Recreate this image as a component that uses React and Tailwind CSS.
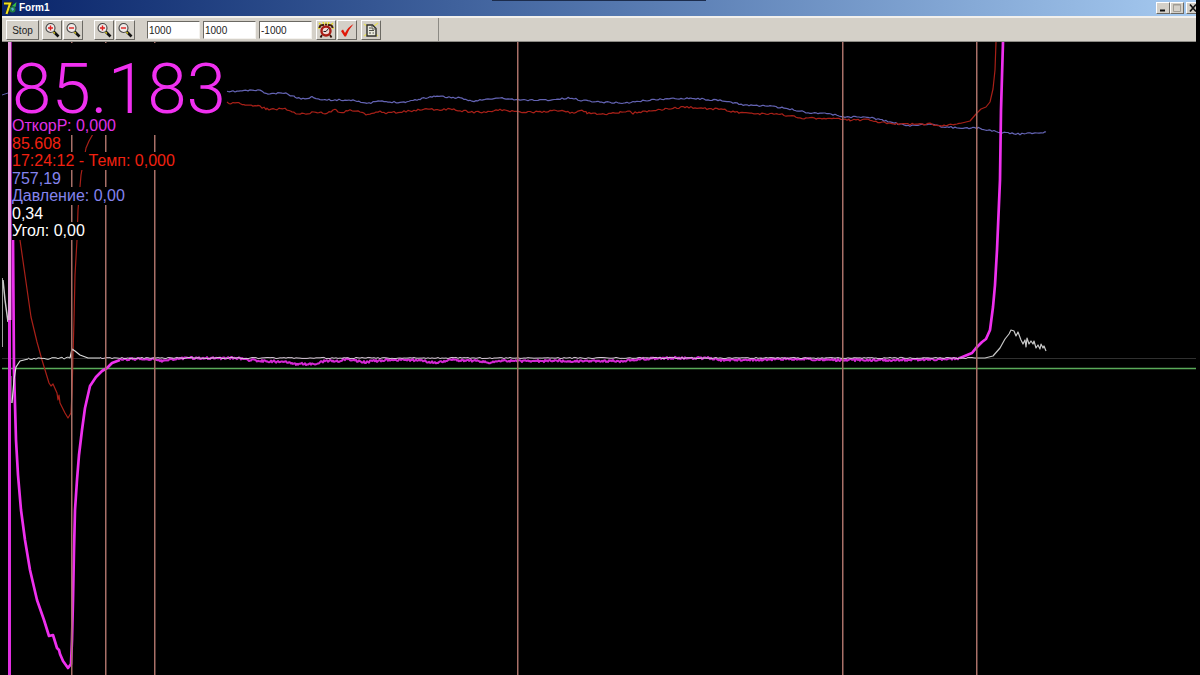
import { useMemo } from "react";

const MARKERS = [71, 105, 154, 517, 842, 976];

const PRESSURE = [
  [227, 92], [240, 91], [258, 90], [268, 94], [284, 93], [295, 97], [303, 99], [312, 97], [325, 100],
  [355, 100], [367, 104], [378, 101], [386, 102], [405, 102], [420, 99], [435, 96], [458, 98], [472, 101],
  [500, 98], [518, 100], [550, 100], [570, 98], [580, 100], [600, 102], [625, 103], [650, 100], [665, 99],
  [690, 98], [723, 101], [745, 105], [768, 106], [790, 109], [810, 113], [825, 113], [845, 117], [868, 117],
  [890, 122], [908, 126], [925, 124], [945, 127], [965, 128], [978, 128], [998, 132], [1020, 134], [1035, 133],
  [1046, 132],
];

const TEMPERATURE = [
  [227, 103], [240, 103], [245, 106], [258, 106], [267, 109], [285, 109], [292, 112], [300, 114], [317, 112],
  [325, 113], [336, 110], [340, 113], [350, 110], [360, 112], [366, 115], [380, 112], [388, 113], [430, 109],
  [440, 110], [450, 109], [470, 112], [490, 112], [500, 110], [518, 112], [540, 112], [562, 110], [570, 113],
  [582, 111], [587, 113], [605, 114], [620, 112], [630, 111], [633, 113], [650, 111], [665, 109], [687, 107],
  [725, 110], [740, 113], [760, 114], [778, 114], [790, 116], [800, 118], [835, 119], [850, 120], [868, 120],
  [885, 123], [900, 124], [930, 124], [945, 126], [955, 124], [962, 123],
];

const TEMPERATURE_END = [
  [962, 123], [970, 121], [976, 114], [981, 109], [986, 107], [990, 102], [993, 89], [995, 70], [996, 42],
];

const TEMPERATURE_START = [
  [20, 240], [25, 275], [31, 317], [37, 342], [42, 360], [49, 383], [51, 386], [53, 384], [57, 393], [58, 400],
  [59, 395], [60, 403], [65, 413], [68, 418], [71, 413], [72, 393], [73, 355], [74, 320], [75, 275], [77, 240],
  [78, 210], [81, 175], [86, 148], [89, 141], [93, 134],
];

const CORRECTED_START = [
  [13, 240], [14, 370], [16, 440], [18, 475], [21, 510], [25, 540], [30, 570], [37, 600], [44, 620], [49, 636],
  [53, 635], [57, 648], [59, 650], [60, 654], [63, 661], [68, 668], [71, 664], [72, 640], [73, 600], [74, 550],
  [75, 510], [77, 480], [79, 455], [82, 430], [85, 408], [90, 386], [96, 377], [102, 371], [107, 368],
  [112, 363], [120, 360],
];

const CORRECTED = [
  [120, 360], [130, 359], [155, 359], [160, 361], [180, 358], [200, 358], [238, 358], [248, 360], [265, 361],
  [285, 362], [295, 364], [315, 364], [325, 361], [340, 361], [345, 359], [365, 362], [385, 360], [420, 360],
  [435, 363], [450, 360], [480, 361], [490, 363], [500, 361], [550, 361], [620, 361], [640, 359], [660, 358],
  [710, 358], [720, 360], [800, 359], [840, 360], [900, 360], [950, 359], [960, 358],
];

const CORRECTED_END = [
  [960, 358], [972, 353], [976, 348], [982, 342], [986, 339], [990, 330], [993, 307], [995, 285], [997, 250],
  [1000, 180], [1001, 110], [1003, 42],
];

const ANGLE_START = [[12, 403], [14, 380], [16, 367], [20, 361], [28, 359]];
const ANGLE_BEND = [[70, 358], [72, 349], [75, 351], [80, 355], [88, 358], [100, 358]];
const ANGLE_END = [
  [975, 358], [985, 358], [993, 356], [1000, 348], [1005, 339], [1009, 334], [1011, 330], [1014, 331],
  [1016, 336], [1018, 332], [1021, 340], [1023, 344], [1025, 340], [1026, 347], [1027, 338], [1029, 344],
  [1031, 341], [1033, 344], [1034, 341], [1036, 348], [1038, 345], [1040, 349], [1041, 344], [1043, 348],
  [1044, 346], [1046, 351],
];

const READINGS = [
  { text: "ОткорР: 0,000", color: "text-[#e030e8]" },
  { text: "85.608", color: "text-[#f02010]" },
  { text: "17:24:12 - Темп: 0,000", color: "text-[#f02010]" },
  { text: "757,19", color: "text-[#8484ee]" },
  { text: "Давление: 0,00", color: "text-[#8484ee]" },
  { text: "0,34", color: "text-white" },
  { text: "Угол: 0,00", color: "text-white" },
];

const raised =
  "border border-t-white border-l-white border-r-[#6b6963] border-b-[#6b6963] bg-[#d4d0c8]";

function toLine(points) {
  return points.map(([x, y]) => `${x},${y}`).join(" ");
}

// Resamples a trace at a fixed step and adds repeatable sensor noise
function withNoise(points, amplitude, step, seed) {
  let state = seed;
  const result = [];
  for (let i = 0; i < points.length - 1; i++) {
    const [x0, y0] = points[i];
    const [x1, y1] = points[i + 1];
    for (let x = x0; x < x1; x += step) {
      state = (state * 16807) % 2147483647;
      const noise = (state / 2147483647 - 0.5) * 2 * amplitude;
      const y = y0 + ((y1 - y0) * (x - x0)) / (x1 - x0) + noise;
      result.push([x, y.toFixed(1)]);
    }
  }
  result.push(points[points.length - 1]);
  return toLine(result);
}

function DelphiIcon() {
  return (
    <svg viewBox="0 0 14 14" className="w-3.5 h-3.5" aria-hidden="true">
      <path d="M1 2.500h6.500L4 12.500" fill="none" stroke="#2a2a10" strokeWidth="3.400" />
      <path d="M1 2.500h6L3.500 13" fill="none" stroke="#f0e020" strokeWidth="2.100" />
      <path d="M9 5l4.500-4-1 5z" fill="#38c040" />
      <circle cx="9.500" cy="8.500" r="3" fill="#208040" />
      <path d="M8 7.500l2-1 1 2-1.500 1.500z" fill="#60a8d8" />
    </svg>
  );
}

function MagnifierIcon({ plus }) {
  return (
    <svg viewBox="0 0 16 16" className="w-4 h-4" aria-hidden="true">
      <path d="M9.500 9.500l5 5" stroke="#111" strokeWidth="2.600" />
      <path d="M9 9.500l2 2" stroke="#d8c820" strokeWidth="1.300" />
      <circle cx="6.500" cy="6" r="4.500" fill="#eeeae8" stroke="#444" strokeWidth="1.100" />
      <path d={plus ? "M4 6h5M6.500 3.500v5" : "M4 6h5"} stroke="#e02020" strokeWidth="1.400" />
    </svg>
  );
}

function AlarmIcon() {
  return (
    <svg viewBox="0 0 16 16" className="w-4 h-4" aria-hidden="true">
      <path d="M1 1l3 3M8 0v3M15 1l-3 3M0 6h2M16 6h-2M5 0l1 3M11 0l-1 3" stroke="#e8e020" strokeWidth="1.300" />
      <path d="M4 13l-1.500 2.500M12 13l1.500 2.500" stroke="#301008" strokeWidth="1.800" />
      <path d="M1.500 6Q1.500 2.500 6 3M14.500 6Q14.500 2.500 10 3" fill="none" stroke="#402010" strokeWidth="2" />
      <circle cx="8" cy="9" r="4.500" fill="#f0d8d4" stroke="#a81c14" strokeWidth="2.400" />
      <path d="M8 9.500l2.500-3M8 9.500H5.500" fill="none" stroke="#222" strokeWidth="1" />
      <path d="M7 2.500h2" stroke="#402010" strokeWidth="1.500" />
    </svg>
  );
}

function CheckIcon() {
  return (
    <svg viewBox="0 0 16 16" className="w-4 h-4" aria-hidden="true">
      <path d="M2 9l2-1.500 2 3.500Q9 5 14.500 2Q9.500 7.500 7 14.500H5.500z" fill="#e01808" />
    </svg>
  );
}

function DocumentIcon() {
  return (
    <svg viewBox="0 0 16 16" className="w-4 h-4" aria-hidden="true">
      <path d="M1 2l3 2M15 1l-4 3M1 14l3-2M15 14l-3-2" stroke="#e8e060" strokeWidth="1.500" />
      <path d="M4 3h5.500l3.500 3.500v7.500h-9z" fill="#e8e8dc" stroke="#30302c" strokeWidth="1.400" />
      <path d="M9 3v4h4M6 6h2M6 8.500h5M6 11h2M9.500 11h1.500" fill="none" stroke="#50504a" strokeWidth="1" />
    </svg>
  );
}

function ToolButton({ label, children }) {
  return (
    <button
      type="button"
      aria-label={label}
      className={`flex items-center justify-center w-5 h-5 shrink-0 ${raised}`}
    >
      {children}
    </button>
  );
}

function NumberField({ label, value }) {
  return (
    <input
      type="text"
      aria-label={label}
      defaultValue={value}
      className="w-[53px] h-[18px] px-px bg-white text-[10px] text-[#222] outline-none border border-t-[#6b6963] border-l-[#6b6963] border-r-[#f4f2ee] border-b-[#f4f2ee]"
    />
  );
}

function WindowButton({ label, children }) {
  return (
    <button type="button" aria-label={label} className={`w-3.5 h-3 shrink-0 ${raised}`}>
      <svg viewBox="0 0 12 10" className="block w-3 h-2.5" aria-hidden="true">
        {children}
      </svg>
    </button>
  );
}

function TitleBar() {
  return (
    <header className="relative flex items-center h-4 pl-px bg-linear-to-r from-[#0a246a] to-[#a6caf0] overflow-hidden">
      <div className="absolute top-0 left-[41%] w-[18%] h-px bg-[#1c2c4c]" />
      <DelphiIcon />
      <h1 className="ml-0.5 flex-1 text-[10px] leading-4 font-bold text-white">Form1</h1>
      <div className="flex -mr-1">
        <WindowButton label="Minimize">
          <path d="M3 7.500h5" stroke="#111" strokeWidth="2" />
        </WindowButton>
        <WindowButton label="Maximize">
          <path d="M2.500 1.500h7v7h-7z" fill="none" stroke="#a09c94" />
          <path d="M2 2h8" stroke="#a09c94" />
        </WindowButton>
        <span className="w-0.5" />
        <WindowButton label="Close">
          <path d="M3 1.500l6 7M9 1.500l-6 7" stroke="#111" strokeWidth="1.700" />
        </WindowButton>
      </div>
    </header>
  );
}

function Toolbar() {
  return (
    <div className="flex h-[26px] bg-[#d4d0c8] border-t-2 border-t-[#f2f0ec] border-b border-b-[#8c8a84]">
      <div className="flex items-center pl-1 pt-px w-[437px] border-r border-r-[#8c8a84]">
        <button type="button" className={`w-[33px] h-5 text-[10px] text-[#222] ${raised}`}>
          Stop
        </button>
        <div className="flex gap-px ml-[3px]">
          <ToolButton label="Zoom in horizontally">
            <MagnifierIcon plus />
          </ToolButton>
          <ToolButton label="Zoom out horizontally">
            <MagnifierIcon />
          </ToolButton>
        </div>
        <div className="flex gap-px ml-[11px]">
          <ToolButton label="Zoom in vertically">
            <MagnifierIcon plus />
          </ToolButton>
          <ToolButton label="Zoom out vertically">
            <MagnifierIcon />
          </ToolButton>
        </div>
        <div className="flex gap-[3px] ml-3">
          <NumberField label="Scale" value="1000" />
          <NumberField label="Maximum" value="1000" />
          <NumberField label="Minimum" value="-1000" />
        </div>
        <div className="flex gap-px ml-1">
          <ToolButton label="Timer">
            <AlarmIcon />
          </ToolButton>
          <ToolButton label="Apply">
            <CheckIcon />
          </ToolButton>
        </div>
        <div className="flex ml-1">
          <ToolButton label="Report">
            <DocumentIcon />
          </ToolButton>
        </div>
      </div>
    </div>
  );
}

function Chart() {
  const traces = useMemo(
    () => ({
      pressure: withNoise(PRESSURE, 0.8, 2, 11),
      temperature: withNoise(TEMPERATURE, 1, 2, 29),
      corrected: withNoise(CORRECTED, 1.1, 1, 47),
      angleLeft: withNoise([[28, 359], [70, 358]], 1.1, 2, 5),
      angle: withNoise([[100, 358], [975, 358]], 0.6, 2, 83),
    }),
    []
  );

  return (
    <svg viewBox="2 42 1194 633" className="block w-full" role="img" aria-label="Sensor traces">
      <path d="M2 358.500H1196" stroke="#303030" />
      <path d="M2 368.500H1196" stroke="#5aaa5a" strokeWidth="1.500" />

      <g fill="none" strokeLinejoin="round">
        <polyline points="2,95 8,93" stroke="#5c5ca8" />
        <polyline points={traces.pressure} stroke="#6464b4" strokeWidth="1.200" />
        <polyline points={toLine(TEMPERATURE_START)} stroke="#a82018" strokeWidth="1.200" />
        <polyline points={traces.temperature} stroke="#a82018" strokeWidth="1.200" />
        <polyline points={toLine(TEMPERATURE_END)} stroke="#a82018" strokeWidth="1.200" />

        <polyline points={toLine(CORRECTED_START)} stroke="#ee30ee" strokeWidth="2.700" />
        <polyline points={traces.corrected} stroke="#d428d4" strokeWidth="2" />
        <polyline points={toLine(CORRECTED_END)} stroke="#ee30ee" strokeWidth="2.700" />

        <path d="M2.500 278V347" stroke="#a0a0a0" />
        <polyline points="3,280 5,300 8,322" stroke="#c8c8c8" strokeWidth="1.500" />
        <path d="M11 376V403" stroke="#b0b0b0" />
        <polyline points={toLine(ANGLE_START)} stroke="#e0e0e0" strokeWidth="1.200" />
        <polyline points={traces.angleLeft} stroke="#d8d8d8" />
        <polyline points={toLine(ANGLE_BEND)} stroke="#e0e0e0" strokeWidth="1.200" />
        <polyline points={traces.angle} stroke="#d8c8d8" strokeWidth="1" />
        <polyline points={toLine(ANGLE_END)} stroke="#c8c8c8" strokeWidth="1.200" />
      </g>

      {MARKERS.map((x) => (
        <rect key={x} x={x} y="42" width="1.500" height="633" fill="#a87068" />
      ))}

      <rect x="8" y="42" width="3" height="633" fill="#e030e0" />
      <rect x="8" y="42" width="3" height="278" fill="#e8a0e0" />
      <rect x="11" y="42" width="1" height="278" fill="#901c90" />
    </svg>
  );
}

function Readout() {
  return (
    <div className="absolute top-px left-2.5 flex flex-col items-start">
      <output className="pt-[18px] bg-black font-['Roboto'] font-light text-[71px] leading-[56px] text-[#f030f0]">
        85.183
      </output>
      <ul className="grid grid-rows-7 h-[123px] justify-items-start text-[16px] leading-[17px]">
        {READINGS.map((reading) => (
          <li
            key={reading.text}
            className={`bg-black whitespace-nowrap first:w-[215px] ${reading.color}`}
          >
            {reading.text}
          </li>
        ))}
      </ul>
    </div>
  );
}

export default function App() {
  return (
    <div className="min-h-screen pl-0.5 pr-1 bg-black font-['Liberation_Sans',sans-serif] overflow-hidden">
      <TitleBar />
      <Toolbar />
      <main className="relative">
        <Chart />
        <Readout />
      </main>
    </div>
  );
}
